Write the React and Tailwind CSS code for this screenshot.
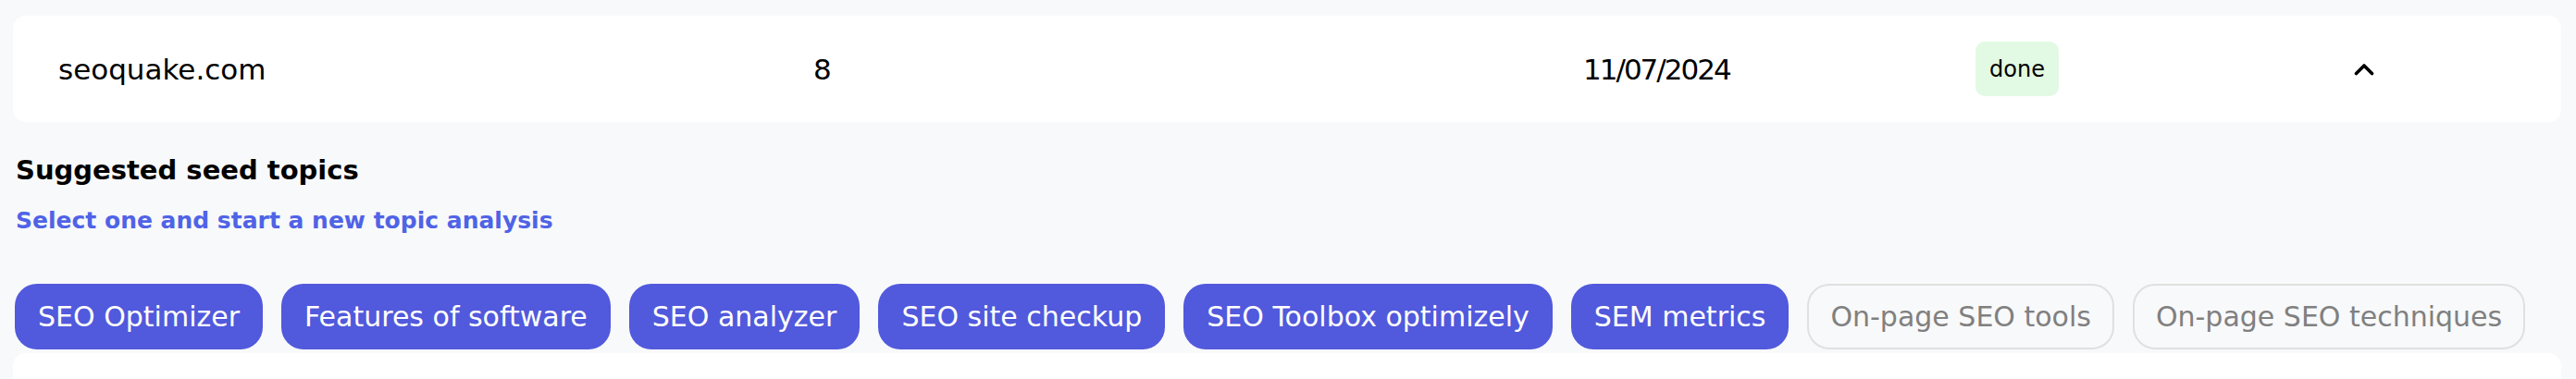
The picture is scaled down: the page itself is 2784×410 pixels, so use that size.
const font = { fontFamily: '"DejaVu Sans", "Liberation Sans", sans-serif' };

const topics = [
  { label: "SEO Optimizer", active: true },
  { label: "Features of software", active: true },
  { label: "SEO analyzer", active: true },
  { label: "SEO site checkup", active: true },
  { label: "SEO Toolbox optimizely", active: true },
  { label: "SEM metrics", active: true },
  { label: "On-page SEO tools", active: false },
  { label: "On-page SEO techniques", active: false },
];

function ChevronUp() {
  return (
    <svg width="22" height="14" viewBox="0 0 22 14" fill="none">
      <polyline points="2.5,11.5 11,3 19.5,11.5" stroke="#000" strokeWidth="3.6"
        strokeLinecap="round" strokeLinejoin="round" />
    </svg>
  );
}

function ProjectRow({ domain, count, date, status }) {
  return (
    <div className="h-[115px] bg-white rounded-[14px] pl-[49px] grid items-center
      grid-cols-[816px_832px_424px_409px_auto] text-black">
      <span className="text-[31px] leading-[40px]">{domain}</span>
      <span className="text-[31px] leading-[40px]">{count}</span>
      <span className="text-[31px] leading-[40px] tracking-[-2px]">{date}</span>
      <div>
        <span className="inline-flex items-center h-[59px] px-[15px] rounded-[10px]
          bg-[#e2f9e3] text-[24px]">{status}</span>
      </div>
      <div className="flex items-center">
        <ChevronUp />
      </div>
    </div>
  );
}

export default function App() {
  return (
    <div style={font} className="min-h-screen bg-[#f8f9fa] pl-[14px] pr-[16px] pt-[17px]">
      <ProjectRow domain="seoquake.com" count="8" date="11/07/2024" status="done" />

      <div className="pl-[3px] mt-[34px]">
        <h3 className="text-[29px] leading-[36px] font-bold text-black">Suggested seed topics</h3>
        <p className="mt-[21px] text-[25px] leading-[32px] font-bold text-[#4f63e6]">
          Select one and start a new topic analysis
        </p>
      </div>

      <div className="flex gap-[20px] mt-[52px] pl-[2px]">
        {topics.map(({ label, active }) => (
          <button key={label}
            className={active
              ? "h-[71px] px-[25px] rounded-[24px] bg-[#5159dc] text-white text-[30px] whitespace-nowrap"
              : "h-[71px] px-[23px] rounded-[24px] border-2 border-[#e0e0e0] text-[#808080] text-[30px] whitespace-nowrap"}>
            {label}
          </button>
        ))}
      </div>

      {/* next result row, only its top edge is in view */}
      <div className="mt-[4px] h-[115px] bg-white rounded-[14px] pt-[28px]">
        <div className="ml-[2121px] w-[93px] h-[59px] rounded-[10px] bg-[#e2f9e3]" />
      </div>
    </div>
  );
}
